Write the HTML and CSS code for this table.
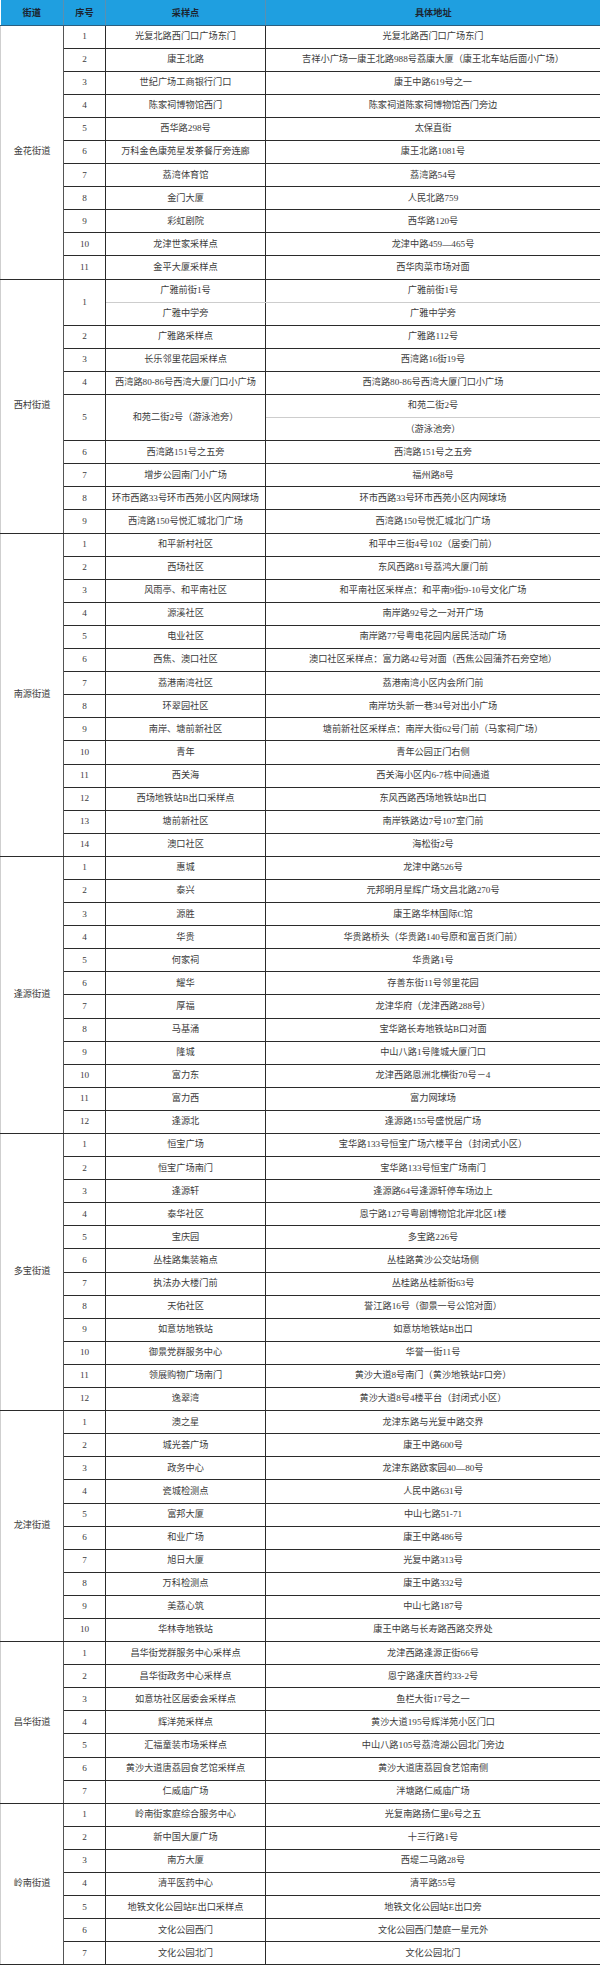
FILE: index.html
```html
<!DOCTYPE html>
<html lang="zh-CN">
<head>
<meta charset="utf-8">
<title>采样点</title>
<link rel="stylesheet" href="styles.css">
</head>
<body>
<table class="sheet">
<colgroup><col class="c-st"><col class="c-no"><col class="c-pt"><col class="c-ad"></colgroup>
<thead>
<tr class="head"><th>街道</th><th>序号</th><th>采样点</th><th>具体地址</th></tr>
</thead>
<tbody>
<tr><td class="st" rowspan="11">金花街道</td><td>1</td><td>光复北路西门口广场东门</td><td>光复北路西门口广场东门</td></tr>
<tr><td>2</td><td>康王北路</td><td>吉祥小广场一康王北路988号荔康大厦（康王北车站后面小广场）</td></tr>
<tr><td>3</td><td>世纪广场工商银行门口</td><td>康王中路619号之一</td></tr>
<tr><td>4</td><td>陈家祠博物馆西门</td><td>陈家祠道陈家祠博物馆西门旁边</td></tr>
<tr><td>5</td><td>西华路298号</td><td>太保直街</td></tr>
<tr><td>6</td><td>万科金色康苑星发茶餐厅旁连廊</td><td>康王北路1081号</td></tr>
<tr><td>7</td><td>荔湾体育馆</td><td>荔湾路54号</td></tr>
<tr><td>8</td><td>金门大厦</td><td>人民北路759</td></tr>
<tr><td>9</td><td>彩虹剧院</td><td>西华路120号</td></tr>
<tr><td>10</td><td>龙津世家采样点</td><td>龙津中路459—465号</td></tr>
<tr><td>11</td><td>金平大厦采样点</td><td>西华肉菜市场对面</td></tr>

<tr><td class="st" rowspan="11">西村街道</td><td rowspan="2">1</td><td class="soft">广雅前街1号</td><td class="soft">广雅前街1号</td></tr>
<tr><td>广雅中学旁</td><td>广雅中学旁</td></tr>
<tr><td>2</td><td>广雅路采样点</td><td>广雅路112号</td></tr>
<tr><td>3</td><td>长乐邻里花园采样点</td><td>西湾路16街19号</td></tr>
<tr><td>4</td><td>西湾路80-86号西湾大厦门口小广场</td><td>西湾路80-86号西湾大厦门口小广场</td></tr>
<tr><td rowspan="2">5</td><td rowspan="2">和苑二街2号（游泳池旁）</td><td class="soft">和苑二街2号</td></tr>
<tr><td>（游泳池旁）</td></tr>
<tr><td>6</td><td>西湾路151号之五旁</td><td>西湾路151号之五旁</td></tr>
<tr><td>7</td><td>增步公园南门小广场</td><td>福州路8号</td></tr>
<tr><td>8</td><td>环市西路33号环市西苑小区内网球场</td><td>环市西路33号环市西苑小区内网球场</td></tr>
<tr><td>9</td><td>西湾路150号悦汇城北门广场</td><td>西湾路150号悦汇城北门广场</td></tr>

<tr><td class="st" rowspan="14">南源街道</td><td>1</td><td>和平新村社区</td><td>和平中三街4号102（居委门前）</td></tr>
<tr><td>2</td><td>西场社区</td><td>东风西路81号荔鸿大厦门前</td></tr>
<tr><td>3</td><td>风雨亭、和平南社区</td><td>和平南社区采样点：和平南9街9-10号文化广场</td></tr>
<tr><td>4</td><td>源溪社区</td><td>南岸路92号之一对开广场</td></tr>
<tr><td>5</td><td>电业社区</td><td>南岸路77号粤电花园内居民活动广场</td></tr>
<tr><td>6</td><td>西焦、澳口社区</td><td>澳口社区采样点：富力路42号对面（西焦公园蒲芥石旁空地）</td></tr>
<tr><td>7</td><td>荔港南湾社区</td><td>荔港南湾小区内会所门前</td></tr>
<tr><td>8</td><td>环翠园社区</td><td>南岸坊头新一巷34号对出小广场</td></tr>
<tr><td>9</td><td>南岸、塘前新社区</td><td>塘前新社区采样点：南岸大街62号门前（马家祠广场）</td></tr>
<tr><td>10</td><td>青年</td><td>青年公园正门右侧</td></tr>
<tr><td>11</td><td>西关海</td><td>西关海小区内6-7栋中间通道</td></tr>
<tr><td>12</td><td>西场地铁站B出口采样点</td><td>东风西路西场地铁站B出口</td></tr>
<tr><td>13</td><td>塘前新社区</td><td>南岸铁路边7号107室门前</td></tr>
<tr><td>14</td><td>澳口社区</td><td>海松街2号</td></tr>

<tr><td class="st" rowspan="12">逢源街道</td><td>1</td><td>惠城</td><td>龙津中路526号</td></tr>
<tr><td>2</td><td>泰兴</td><td>元邦明月星辉广场文昌北路270号</td></tr>
<tr><td>3</td><td>源胜</td><td>康王路华林国际C馆</td></tr>
<tr><td>4</td><td>华贵</td><td>华贵路桥头（华贵路140号原和富百货门前）</td></tr>
<tr><td>5</td><td>何家祠</td><td>华贵路1号</td></tr>
<tr><td>6</td><td>耀华</td><td>存善东街11号邻里花园</td></tr>
<tr><td>7</td><td>厚福</td><td>龙津华府（龙津西路288号）</td></tr>
<tr><td>8</td><td>马基涌</td><td>宝华路长寿地铁站B口对面</td></tr>
<tr><td>9</td><td>隆城</td><td>中山八路1号隆城大厦门口</td></tr>
<tr><td>10</td><td>富力东</td><td>龙津西路恩洲北横街70号－4</td></tr>
<tr><td>11</td><td>富力西</td><td>富力网球场</td></tr>
<tr><td>12</td><td>逢源北</td><td>逢源路155号盛悦居广场</td></tr>

<tr><td class="st" rowspan="12">多宝街道</td><td>1</td><td>恒宝广场</td><td>宝华路133号恒宝广场六楼平台（封闭式小区）</td></tr>
<tr><td>2</td><td>恒宝广场南门</td><td>宝华路133号恒宝广场南门</td></tr>
<tr><td>3</td><td>逢源轩</td><td>逢源路64号逢源轩停车场边上</td></tr>
<tr><td>4</td><td>泰华社区</td><td>恩宁路127号粤剧博物馆北岸北区1楼</td></tr>
<tr><td>5</td><td>宝庆园</td><td>多宝路226号</td></tr>
<tr><td>6</td><td>丛桂路集装箱点</td><td>丛桂路黄沙公交站场侧</td></tr>
<tr><td>7</td><td>执法办大楼门前</td><td>丛桂路丛桂新街63号</td></tr>
<tr><td>8</td><td>天佑社区</td><td>誉江路16号（御景一号公馆对面）</td></tr>
<tr><td>9</td><td>如意坊地铁站</td><td>如意坊地铁站B出口</td></tr>
<tr><td>10</td><td>御景党群服务中心</td><td>华誉一街11号</td></tr>
<tr><td>11</td><td>领展购物广场南门</td><td>黄沙大道8号南门（黄沙地铁站F口旁）</td></tr>
<tr><td>12</td><td>逸翠湾</td><td>黄沙大道8号4楼平台（封闭式小区）</td></tr>

<tr><td class="st" rowspan="10">龙津街道</td><td>1</td><td>澳之星</td><td>龙津东路与光复中路交界</td></tr>
<tr><td>2</td><td>城光荟广场</td><td>康王中路600号</td></tr>
<tr><td>3</td><td>政务中心</td><td>龙津东路欧家园40—80号</td></tr>
<tr><td>4</td><td>瓷城检测点</td><td>人民中路631号</td></tr>
<tr><td>5</td><td>富邦大厦</td><td>中山七路51-71</td></tr>
<tr><td>6</td><td>和业广场</td><td>康王中路486号</td></tr>
<tr><td>7</td><td>旭日大厦</td><td>光复中路313号</td></tr>
<tr><td>8</td><td>万科检测点</td><td>康王中路332号</td></tr>
<tr><td>9</td><td>美荔心筑</td><td>中山七路187号</td></tr>
<tr><td>10</td><td>华林寺地铁站</td><td>康王中路与长寿路西路交界处</td></tr>

<tr><td class="st" rowspan="7">昌华街道</td><td>1</td><td>昌华街党群服务中心采样点</td><td>龙津西路逢源正街66号</td></tr>
<tr><td>2</td><td>昌华街政务中心采样点</td><td>恩宁路逢庆首约33-2号</td></tr>
<tr><td>3</td><td>如意坊社区居委会采样点</td><td>鱼栏大街17号之一</td></tr>
<tr><td>4</td><td>辉洋苑采样点</td><td>黄沙大道195号辉洋苑小区门口</td></tr>
<tr><td>5</td><td>汇福童装市场采样点</td><td>中山八路105号荔湾湖公园北门旁边</td></tr>
<tr><td>6</td><td>黄沙大道唐荔园食艺馆采样点</td><td>黄沙大道唐荔园食艺馆南侧</td></tr>
<tr><td>7</td><td>仁威庙广场</td><td>泮塘路仁威庙广场</td></tr>

<tr><td class="st" rowspan="7">岭南街道</td><td>1</td><td>岭南街家庭综合服务中心</td><td>光复南路扬仁里6号之五</td></tr>
<tr><td>2</td><td>新中国大厦广场</td><td>十三行路1号</td></tr>
<tr><td>3</td><td>南方大厦</td><td>西堤二马路28号</td></tr>
<tr><td>4</td><td>清平医药中心</td><td>清平路55号</td></tr>
<tr><td>5</td><td>地铁文化公园站E出口采样点</td><td>地铁文化公园站E出口旁</td></tr>
<tr><td>6</td><td>文化公园西门</td><td>文化公园西门楚庭一星元外</td></tr>
<tr><td>7</td><td>文化公园北门</td><td>文化公园北门</td></tr>
</tbody>
</table>
</body>
</html>
```

FILE: styles.css
```css
html, body {
  margin: 0;
  padding: 0;
  background: #ffffff;
}

.sheet {
  width: 600px;
  border-collapse: collapse;
  table-layout: fixed;
  font-family: "Liberation Serif", "Noto Sans CJK SC", sans-serif;
  font-size: 9.2px;
  color: #3c3c3c;
}

.c-st { width: 63px; }
.c-no { width: 42px; }
.c-pt { width: 160px; }
.c-ad { width: 335px; }

.head {
  height: 25px;
  background: #1f9fe0;
}

.head th {
  font-weight: bold;
  color: #1c2430;
  text-align: center;
  vertical-align: middle;
  padding: 0;
  border: 1px solid #5b8fb0;
  border-top: 0;
  border-bottom: 1px solid #2a5f80;
}

.head th:first-child { border-left: 0; }
.head th:last-child { border-right: 0; }

tbody tr {
  height: 23.1px;
}

tbody td {
  padding: 0;
  text-align: center;
  vertical-align: middle;
  white-space: nowrap;
  overflow: hidden;
  border: 1px solid #2b2b2b;
  line-height: 1;
}

tbody td.st {
  border-left: 1px solid #cfcfcf;
  border-right: 1px solid #555555;
}

tbody td:last-child {
  border-right: 1px solid #444444;
}

tbody td.soft {
  border-bottom: 1px solid #cdcdcd;
}
```
